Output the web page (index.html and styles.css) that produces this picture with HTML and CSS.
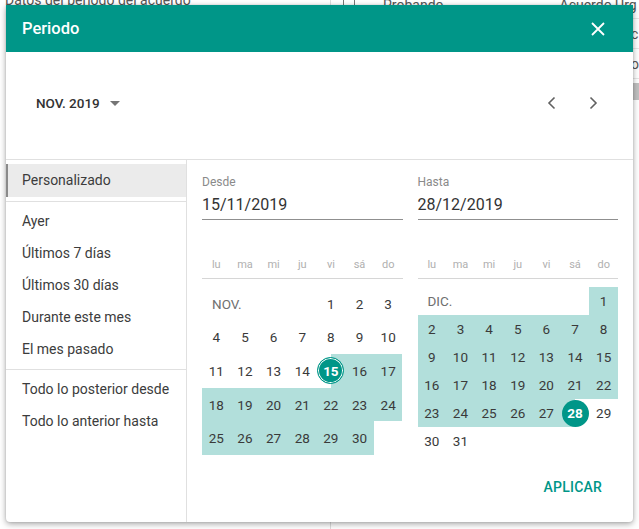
FILE: index.html
```html
<!DOCTYPE html>
<html lang="es">
<head>
<meta charset="utf-8">
<title>Periodo</title>
<link rel="stylesheet" href="styles.css">
</head>
<body>
<div class="page">
  <div class="page-left">Datos del periodo del acuerdo</div>
  <div class="page-right">
    <div class="page-row">
      <span class="chk"></span>
      <span class="cell-a">Probando</span>
      <span class="cell-b">Acuerdo Urg</span>
    </div>
    <div class="page-row"><span class="cell-c">c</span></div>
    <div class="page-row"><span class="cell-c">o</span></div>
  </div>
  <div class="scroll"></div>
</div>

<div class="dialog">
  <div class="dlg-header">
    <span class="dlg-title">Periodo</span>
    <svg class="close" width="14" height="14" viewBox="0 0 14 14"><path d="M1 1L13 13M13 1L1 13" stroke="#fff" stroke-width="1.8" fill="none"/></svg>
  </div>
  <div class="toolbar">
    <div class="month-select">NOV. 2019 <svg width="10" height="5" viewBox="0 0 10 5"><path d="M0 0H10L5 5Z" fill="#757575"/></svg></div>
    <div class="nav">
      <svg width="16" height="16" viewBox="0 0 16 16"><path d="M10.5 2.5L5 8l5.5 5.5" stroke="#616161" stroke-width="1.6" fill="none"/></svg>
      <svg width="16" height="16" viewBox="0 0 16 16"><path d="M5.5 2.5L11 8l-5.5 5.5" stroke="#616161" stroke-width="1.6" fill="none"/></svg>
    </div>
  </div>
  <div class="body">
    <div class="side">
      <div class="item active">Personalizado</div>
      <div class="sep"></div>
      <div class="item">Ayer</div>
      <div class="item">Últimos 7 días</div>
      <div class="item">Últimos 30 días</div>
      <div class="item">Durante este mes</div>
      <div class="item">El mes pasado</div>
      <div class="sep"></div>
      <div class="item">Todo lo posterior desde</div>
      <div class="item">Todo lo anterior hasta</div>
    </div>
    <div class="main">
      <div class="cals">
        <div class="cal">
          <div class="field-label">Desde</div>
          <div class="field-value">15/11/2019</div>
          <div class="weekdays"><span>lu</span><span>ma</span><span>mi</span><span>ju</span><span>vi</span><span>sá</span><span>do</span></div>
          <div class="grid rows5">
            <div class="month-label span4">NOV.</div>
            <div class="day">1</div><div class="day">2</div><div class="day">3</div>
            <div class="day">4</div><div class="day">5</div><div class="day">6</div><div class="day">7</div><div class="day">8</div><div class="day">9</div><div class="day">10</div>
            <div class="day">11</div><div class="day">12</div><div class="day">13</div><div class="day">14</div><div class="day start"><span class="dot ring">15</span></div><div class="day in">16</div><div class="day in">17</div>
            <div class="day in">18</div><div class="day in">19</div><div class="day in">20</div><div class="day in">21</div><div class="day in">22</div><div class="day in">23</div><div class="day in">24</div>
            <div class="day in">25</div><div class="day in">26</div><div class="day in">27</div><div class="day in">28</div><div class="day in">29</div><div class="day in">30</div>
          </div>
        </div>
        <div class="cal">
          <div class="field-label">Hasta</div>
          <div class="field-value">28/12/2019</div>
          <div class="weekdays"><span>lu</span><span>ma</span><span>mi</span><span>ju</span><span>vi</span><span>sá</span><span>do</span></div>
          <div class="grid rows6">
            <div class="month-label span6">DIC.</div>
            <div class="day in">1</div>
            <div class="day in">2</div><div class="day in">3</div><div class="day in">4</div><div class="day in">5</div><div class="day in">6</div><div class="day in">7</div><div class="day in">8</div>
            <div class="day in">9</div><div class="day in">10</div><div class="day in">11</div><div class="day in">12</div><div class="day in">13</div><div class="day in">14</div><div class="day in">15</div>
            <div class="day in">16</div><div class="day in">17</div><div class="day in">18</div><div class="day in">19</div><div class="day in">20</div><div class="day in">21</div><div class="day in">22</div>
            <div class="day in">23</div><div class="day in">24</div><div class="day in">25</div><div class="day in">26</div><div class="day in">27</div><div class="day end"><span class="dot">28</span></div><div class="day">29</div>
            <div class="day">30</div><div class="day">31</div>
          </div>
        </div>
      </div>
      <div class="actions"><button class="apply">APLICAR</button></div>
    </div>
  </div>
</div>
</body>
</html>
```
FILE: styles.css
```css
* { box-sizing: border-box; }
html, body { margin: 0; padding: 0; }
body {
  width: 639px;
  height: 529px;
  overflow: hidden;
  background: #fff;
  font-family: Roboto, "Liberation Sans", sans-serif;
  color: #333;
  position: relative;
}

/* background page */
.page {
  display: flex;
  margin-top: -9px;
  font-size: 14px;
  color: #555;
  width: 639px;
  overflow: hidden;
  white-space: nowrap;
}
.page-left {
  width: 330px;
  padding-left: 5px;
  line-height: 18px;
  flex-shrink: 0;
}
.page-right {
  flex: 1;
  border-left: 1px solid #ddd;
  height: 540px;
  overflow: hidden;
}
.page-row {
  display: flex;
  align-items: center;
  height: 30px;
  border-bottom: 1px solid #e6e6e6;
}
.page-row:first-child { height: 28px; }
.chk {
  width: 12px; height: 12px;
  border: 1.5px solid #777;
  margin-left: 12px;
  flex-shrink: 0;
}
.cell-a { margin-left: 28px; }
.cell-b { margin-left: 116px; }
.cell-c { margin-left: 300px; }
.scroll {
  position: absolute;
  right: 0; top: 83px;
  width: 6px; height: 17px;
  background: #c1c1c1;
}

/* dialog */
.dialog {
  position: absolute;
  left: 6px;
  top: 5px;
  width: 627px;
  height: 517px;
  background: #fff;
  border-radius: 0 0 4px 4px;
  box-shadow: 0 2px 6px rgba(0,0,0,0.35), 0 0 2px rgba(0,0,0,0.15);
  display: flex;
  flex-direction: column;
  overflow: hidden;
}
.dlg-header {
  height: 47px;
  background: #009688;
  display: flex;
  align-items: center;
  justify-content: space-between;
  padding: 0 28px 0 16px;
  flex-shrink: 0;
}
.dlg-title {
  color: #fff;
  font-size: 16.5px;
  font-weight: 500;
}
.toolbar {
  height: 108px;
  display: flex;
  align-items: center;
  justify-content: space-between;
  padding: 0 32px 6px 30px;
  border-bottom: 1px solid #e0e0e0;
  flex-shrink: 0;
}
.month-select {
  font-size: 13.5px;
  font-weight: 500;
  color: #333;
  display: flex;
  align-items: center;
  gap: 10px;
}
.month-select svg { margin-top: 1px; }
.nav { display: flex; gap: 25px; }

.body {
  flex: 1;
  display: flex;
}
.side {
  width: 181px;
  border-right: 1px solid #e0e0e0;
  padding-top: 4px;
  flex-shrink: 0;
}
.item {
  height: 32px;
  line-height: 32px;
  padding-left: 16px;
  font-size: 14px;
  color: #3c3c3c;
}
.item.active {
  height: 33px;
  line-height: 33px;
  background: #ebebeb;
  border-left: 2px solid #8a8a8a;
  padding-left: 14px;
}
.sep {
  height: 1px;
  background: #e0e0e0;
  margin: 4px 0 3px;
}

.main {
  flex: 1;
  padding: 0 15px;
  display: flex;
  flex-direction: column;
}
.cals {
  display: flex;
  gap: 15px;
}
.cal { flex: 1; }
.field-label {
  margin-top: 14px;
  font-size: 12px;
  line-height: 16px;
  color: #8a8a8a;
}
.field-value {
  margin-top: 4px;
  font-size: 16px;
  line-height: 22px;
  color: #333;
  padding-bottom: 3px;
  border-bottom: 1px solid #8f8f8f;
}
.weekdays {
  margin-top: 34px;
  display: grid;
  grid-template-columns: repeat(7, 1fr);
  height: 25px;
  line-height: 22px;
  border-bottom: 1px solid #d6d6d6;
  font-size: 11px;
  color: #b0b0b0;
  text-align: center;
}
.grid {
  margin-top: 8px;
  height: 168px;
  display: grid;
  grid-template-columns: repeat(7, 1fr);
  font-size: 13.5px;
  color: #3a3a3a;
}
.rows5 { grid-template-rows: repeat(5, 1fr); }
.rows6 { grid-template-rows: repeat(6, 1fr); }
.month-label {
  display: flex;
  align-items: center;
  padding-left: 10px;
  font-size: 13.5px;
  color: #6f6f6f;
}
.span4 { grid-column: span 4; }
.span6 { grid-column: span 6; }
.day {
  display: flex;
  align-items: center;
  justify-content: center;
}
.day.in { background: #b2dfdb; }
.day.start { background: linear-gradient(to right, transparent 50%, #b2dfdb 50%); }
.day.end { background: linear-gradient(to right, #b2dfdb 50%, transparent 50%); }
.dot {
  width: 27px;
  height: 27px;
  border-radius: 50%;
  background: #009688;
  color: #fff;
  font-weight: 700;
  display: flex;
  align-items: center;
  justify-content: center;
}
.dot.ring {
  border: 1px solid #009688;
  box-shadow: inset 0 0 0 1px #fff;
}
.actions {
  display: flex;
  justify-content: flex-end;
  margin-top: 14px;
}
.apply {
  background: none;
  border: 0;
  padding: 0;
  margin-right: 16px;
  height: 36px;
  font-family: Roboto, "Liberation Sans", sans-serif;
  font-size: 14px;
  font-weight: 500;
  color: #009688;
  letter-spacing: 0.2px;
}
```
